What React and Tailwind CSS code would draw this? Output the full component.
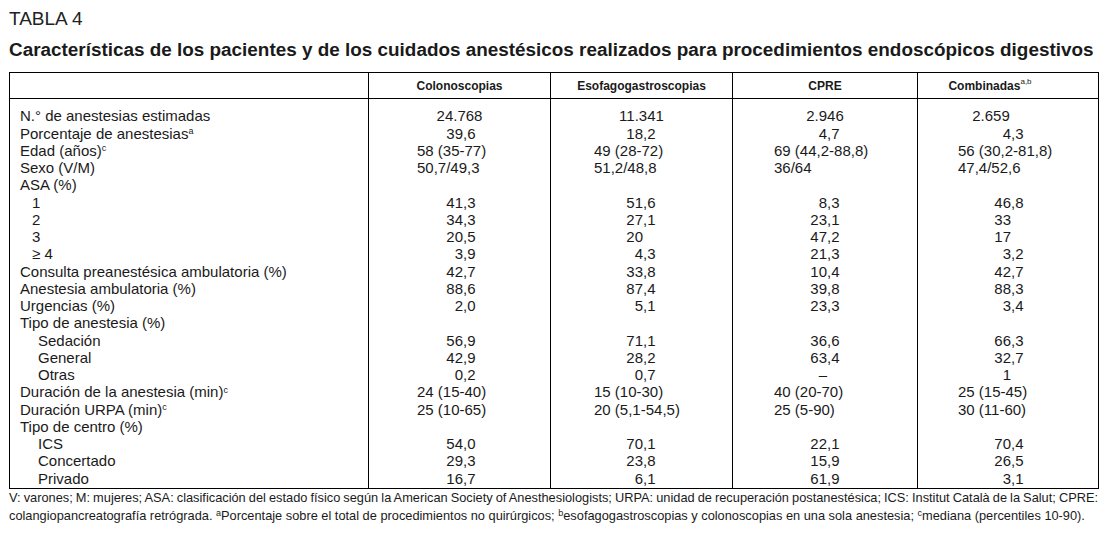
import React from "react";

// table rows: label, indent kind, values for the four procedure columns
const rows = [
  { label: "N.° de anestesias estimadas", v: ["24.768", "11.341", "2.946", "2.659"], center: true },
  { label: "Porcentaje de anestesias", sup: "a", v: ["39,6", "18,2", "4,7", "4,3"] },
  { label: "Edad (años)", sup: "c", v: ["58 (35-77)", "49 (28-72)", "69 (44,2-88,8)", "56 (30,2-81,8)"] },
  { label: "Sexo (V/M)", v: ["50,7/49,3", "51,2/48,8", "36/64", "47,4/52,6"] },
  { label: "ASA (%)", v: null },
  { label: "1", indent: "num", v: ["41,3", "51,6", "8,3", "46,8"] },
  { label: "2", indent: "num", v: ["34,3", "27,1", "23,1", "33"] },
  { label: "3", indent: "num", v: ["20,5", "20", "47,2", "17"] },
  { label: "≥ 4", indent: "num", v: ["3,9", "4,3", "21,3", "3,2"] },
  { label: "Consulta preanestésica ambulatoria (%)", v: ["42,7", "33,8", "10,4", "42,7"] },
  { label: "Anestesia ambulatoria (%)", v: ["88,6", "87,4", "39,8", "88,3"] },
  { label: "Urgencias (%)", v: ["2,0", "5,1", "23,3", "3,4"] },
  { label: "Tipo de anestesia (%)", v: null },
  { label: "Sedación", indent: "txt", v: ["56,9", "71,1", "36,6", "66,3"] },
  { label: "General", indent: "txt", v: ["42,9", "28,2", "63,4", "32,7"] },
  { label: "Otras", indent: "txt", v: ["0,2", "0,7", "–", "1"] },
  { label: "Duración de la anestesia (min)", sup: "c", v: ["24 (15-40)", "15 (10-30)", "40 (20-70)", "25 (15-45)"] },
  { label: "Duración URPA (min)", sup: "c", v: ["25 (10-65)", "20 (5,1-54,5)", "25 (5-90)", "30 (11-60)"] },
  { label: "Tipo de centro (%)", v: null },
  { label: "ICS", indent: "txt", v: ["54,0", "70,1", "22,1", "70,4"] },
  { label: "Concertado", indent: "txt", v: ["29,3", "23,8", "15,9", "26,5"] },
  { label: "Privado", indent: "txt", v: ["16,7", "6,1", "61,9", "3,1"] },
];

const intW = ["w-[94px]", "w-[92px]", "w-[94px]", "w-[93px]"];
const rangePl = ["pl-[48px]", "pl-[43px]", "pl-[41px]", "pl-[40px]"];
// first row (thousands) sits roughly centred, the last column a bit to the left
const thousandCls = ["text-center", "text-center", "text-center", "text-center pr-[34px]"];

const rowCls = "h-[17.25px] leading-[17.25px] whitespace-nowrap";

function Value({ row, col }) {
  if (!row.v) return <div className={rowCls} />;
  const val = row.v[col];
  if (row.center) return <div className={`${rowCls} ${thousandCls[col]}`}>{val}</div>;
  if (val.includes("(") || val.includes("/")) {
    return <div className={`${rowCls} ${rangePl[col]}`}>{val}</div>;
  }
  const [int, dec] = val.split(",");
  return (
    <div className={`${rowCls} flex`}>
      <span className={`${intW[col]} text-right shrink-0`}>{int}</span>
      {dec !== undefined && <span>,{dec}</span>}
    </div>
  );
}

const heads = ["Colonoscopias", "Esofagogastroscopias", "CPRE"];

export default function App() {
  return (
    <div className="w-[1108px] h-[536px] overflow-hidden bg-white pl-[9px] pt-[8px] text-[#1a1a1a] font-['Liberation_Sans',Arial,sans-serif]">
      <div className="text-[19px] leading-[22px] text-[#222]">TABLA 4</div>
      <h1 className="mt-[9px] text-[18.9px] leading-[22px] font-bold whitespace-nowrap">
        Características de los pacientes y de los cuidados anestésicos realizados para procedimientos endoscópicos digestivos
      </h1>

      <div className="mt-[11px] w-[1090px] border border-black">
        {/* header */}
        <div className="grid grid-cols-[358px_182px_182px_185px_181px] h-[26px] border-b border-black text-[12px] font-bold">
          <div />
          {heads.map((h) => (
            <div key={h} className="border-l border-black flex items-center justify-center">
              {h}
            </div>
          ))}
          <div className="border-l border-black flex items-center justify-center pr-[36px]">
            Combinadas<sup className="text-[8px] font-normal">a,b</sup>
          </div>
        </div>

        {/* body */}
        <div className="grid grid-cols-[358px_182px_182px_185px_181px] text-[15px]">
          <div className="pt-[8.35px] pb-[1.3px] pl-[10px]">
            {rows.map((r) => (
              <div
                key={r.label}
                className={`${rowCls} ${r.indent === "num" ? "pl-[12px]" : r.indent === "txt" ? "pl-[18px]" : ""}`}
              >
                {r.label}
                {r.sup && <sup className="text-[9px]">{r.sup}</sup>}
              </div>
            ))}
          </div>
          {[0, 1, 2, 3].map((c) => (
            <div key={c} className="border-l border-black pt-[8.35px] pb-[1.3px]">
              {rows.map((r) => (
                <Value key={r.label} row={r} col={c} />
              ))}
            </div>
          ))}
        </div>
      </div>

      <div className="w-[1089px] text-[12.8px] leading-[18px]">
        <div className="whitespace-nowrap text-justify [text-align-last:justify] [word-spacing:-1.5px]">
          V: varones; M: mujeres; ASA: clasificación del estado físico según la American Society of Anesthesiologists; URPA: unidad de recuperación postanestésica; ICS: Institut Català de la Salut; CPRE:
        </div>
        <div className="whitespace-nowrap">
          colangiopancreatografía retrógrada. <sup className="text-[9px]">a</sup>Porcentaje sobre el total de procedimientos no quirúrgicos; <sup className="text-[9px]">b</sup>esofagogastroscopias y colonoscopias en una sola anestesia; <sup className="text-[9px]">c</sup>mediana (percentiles 10-90).
        </div>
      </div>
    </div>
  );
}
